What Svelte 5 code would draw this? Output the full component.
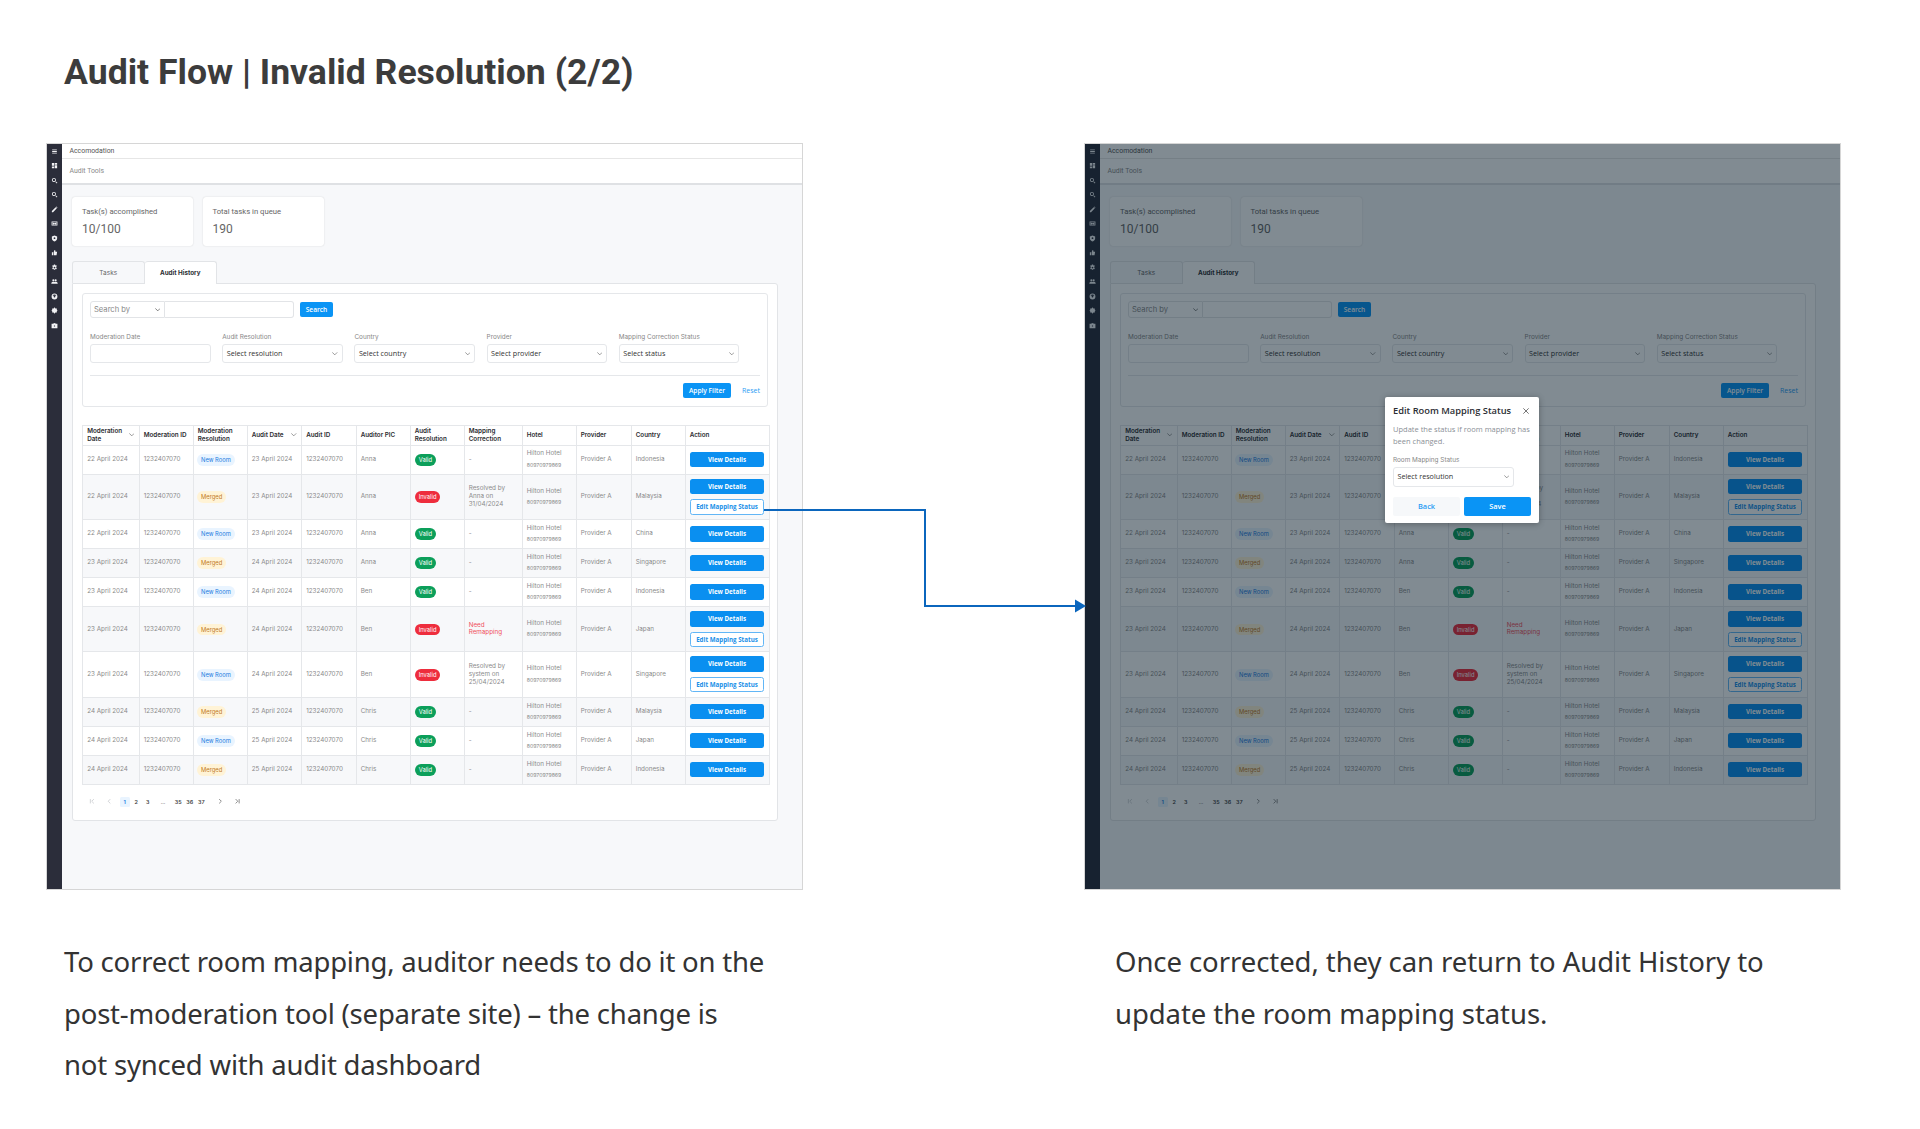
<script>
  const rows = [
    { mod: '22 April 2024', res: 'New Room', audit: '23 April 2024', pic: 'Anna', status: 'Valid', fix: '-', country: 'Indonesia' },
    { mod: '22 April 2024', res: 'Merged', audit: '23 April 2024', pic: 'Anna', status: 'Invalid', fix: 'Resolved by Anna on 31/04/2024', country: 'Malaysia', edit: true },
    { mod: '22 April 2024', res: 'New Room', audit: '23 April 2024', pic: 'Anna', status: 'Valid', fix: '-', country: 'China' },
    { mod: '23 April 2024', res: 'Merged', audit: '24 April 2024', pic: 'Anna', status: 'Valid', fix: '-', country: 'Singapore' },
    { mod: '23 April 2024', res: 'New Room', audit: '24 April 2024', pic: 'Ben', status: 'Valid', fix: '-', country: 'Indonesia' },
    { mod: '23 April 2024', res: 'Merged', audit: '24 April 2024', pic: 'Ben', status: 'Invalid', fix: 'Need Remapping', need: true, country: 'Japan', edit: true },
    { mod: '23 April 2024', res: 'New Room', audit: '24 April 2024', pic: 'Ben', status: 'Invalid', fix: 'Resolved by system on 25/04/2024', country: 'Singapore', edit: true },
    { mod: '24 April 2024', res: 'Merged', audit: '25 April 2024', pic: 'Chris', status: 'Valid', fix: '-', country: 'Malaysia' },
    { mod: '24 April 2024', res: 'New Room', audit: '25 April 2024', pic: 'Chris', status: 'Valid', fix: '-', country: 'Japan' },
    { mod: '24 April 2024', res: 'Merged', audit: '25 April 2024', pic: 'Chris', status: 'Valid', fix: '-', country: 'Indonesia' }
  ];

  const colWidths = [56.5, 54, 54, 54.5, 54.5, 54, 54, 58, 54, 55, 54, 84];
  const filters = [
    { label: 'Audit Resolution', text: 'Select resolution' },
    { label: 'Country', text: 'Select country' },
    { label: 'Provider', text: 'Select provider' },
    { label: 'Mapping Correction Status', text: 'Select status' }
  ];

  // sidebar glyphs, 24 box, filled
  const navIcons = [
    'M4 5h16v3H4zM4 10.5h16v3H4zM4 16h16v3H4z',
    'M3 3h8v10H3zM13 3h8v6h-8zM13 11h8v10h-8zM3 15h8v6H3z',
    'M10 3a7 7 0 1 1 0 14 7 7 0 0 1 0-14zm0 3a4 4 0 1 0 0 8 4 4 0 0 0 0-8zM15 17l2-2 5 5-2 2z',
    'M10 3a7 7 0 1 1 0 14 7 7 0 0 1 0-14zm0 3a4 4 0 1 0 0 8 4 4 0 0 0 0-8zM15 17l2-2 5 5-2 2z',
    'M3 21v-4L16 4l4 4L7 21zM17 3l2-1 3 3-1 2z',
    'M2 5h20v14H2zm3 3v8h14V8zm4 1a3 3 0 1 1 0 6 3 3 0 0 1 0-6zm6 0a3 3 0 1 1 0 6 3 3 0 0 1 0-6z',
    'M12 2l9 3v7c0 5-4 8-9 10-5-2-9-5-9-10V5zm0 6a3 3 0 1 0 0 6 3 3 0 0 0 0-6z',
    'M3 11h4v10H3zM9 11l3-8c2 0 3 1 3 3v3h6l-2 12H9z',
    'M10 2h4l1 3 3-1 2 3-2 2v4l2 2-2 3-3-1-1 3h-4l-1-3-3 1-2-3 2-2v-4L4 7l2-3 3 1zm2 7a3 3 0 1 0 0 6 3 3 0 0 0 0-6z',
    'M8 4a3.5 3.5 0 1 1 0 7 3.5 3.5 0 0 1 0-7zm8 0a3.5 3.5 0 1 1 0 7 3.5 3.5 0 0 1 0-7zM1 20c0-5 3-7 7-7 2 0 3 .5 4 1 1-.5 2-1 4-1 4 0 7 2 7 7z',
    'M12 2a10 10 0 1 1 0 20 10 10 0 0 1 0-20zm0 3a7 7 0 0 0-6.5 4.5h13A7 7 0 0 0 12 5zm0 4a3 3 0 1 0 0 6 3 3 0 0 0 0-6z',
    'M12 1l3 4h5v5l3 2-3 2v5h-5l-3 4-3-4H4v-5l-3-2 3-2V5h5z',
    'M9 3h6v3h7v15H2V6h7zm2 2v1h2V5zm-1 7v3h4v-3z'
  ];
</script>

{#snippet chevron()}
  <svg class="chev" viewBox="0 0 10 6" fill="none" stroke="currentColor" stroke-width="1.2" stroke-linecap="round" stroke-linejoin="round">
    <polyline points="1 1 5 5 9 1"></polyline>
  </svg>
{/snippet}

{#snippet screen(dimmed)}
  <div class="mock">
    <aside class="rail">
      {#each navIcons as d}
        <svg viewBox="0 0 24 24" fill="currentColor" fill-rule="evenodd"><path {d}></path></svg>
      {/each}
    </aside>

    <div class="main">
      <div class="crumb">Accomodation</div>
      <div class="subcrumb">Audit Tools</div>

      <div class="content">
        <div class="stats">
          <div class="stat">
            <div class="stat-label">Task(s) accomplished</div>
            <div class="stat-value">10/100</div>
          </div>
          <div class="stat">
            <div class="stat-label">Total tasks in queue</div>
            <div class="stat-value">190</div>
          </div>
        </div>

        <div class="tabs">
          <div class="tab">Tasks</div>
          <div class="tab active">Audit History</div>
        </div>

        <div class="panel">
          <div class="filters">
            <div class="search-row">
              <div class="search-by">Search by {@render chevron()}</div>
              <div class="search-input"></div>
              <div class="btn-search">Search</div>
            </div>

            <div class="filter-grid">
              <div class="field">
                <span class="field-label">Moderation Date</span>
                <div class="select"></div>
              </div>
              {#each filters as f}
                <div class="field">
                  <span class="field-label">{f.label}</span>
                  <div class="select">{f.text} {@render chevron()}</div>
                </div>
              {/each}
            </div>

            <div class="filter-foot">
              <div class="btn-apply">Apply Filter</div>
              <span class="reset">Reset</span>
            </div>
          </div>

          <table>
            <colgroup>
              {#each colWidths as w}<col style="width:{w}px" />{/each}
            </colgroup>
            <thead>
              <tr>
                <th><div class="th-sort">Moderation Date {@render chevron()}</div></th>
                <th>Moderation ID</th>
                <th>Moderation Resolution</th>
                <th><div class="th-sort">Audit Date {@render chevron()}</div></th>
                <th>Audit ID</th>
                <th>Auditor PIC</th>
                <th>Audit Resolution</th>
                <th>Mapping Correction</th>
                <th>Hotel</th>
                <th>Provider</th>
                <th>Country</th>
                <th>Action</th>
              </tr>
            </thead>
            <tbody>
              {#each rows as r}
                <tr class:tall={r.edit}>
                  <td>{r.mod}</td>
                  <td>1232407070</td>
                  <td><span class="badge" class:new={r.res === 'New Room'} class:merged={r.res === 'Merged'}>{r.res}</span></td>
                  <td>{r.audit}</td>
                  <td>1232407070</td>
                  <td>{r.pic}</td>
                  <td><span class="pill" class:invalid={r.status === 'Invalid'}>{r.status}</span></td>
                  <td class:need={r.need}>{r.fix}</td>
                  <td class="hotel">Hilton Hotel<small>80970979869</small></td>
                  <td>Provider A</td>
                  <td>{r.country}</td>
                  <td class="actions">
                    <div class="btn-view">View Details</div>
                    {#if r.edit}<div class="btn-edit">Edit Mapping Status</div>{/if}
                  </td>
                </tr>
              {/each}
            </tbody>
          </table>

          <div class="pager">
            <svg class="off" viewBox="0 0 12 12"><path d="M2.5 2v8M9 2L5 6l4 4"></path></svg>
            <svg class="off gap" viewBox="0 0 12 12"><path d="M8 2L4 6l4 4"></path></svg>
            <span class="page on">1</span>
            <span class="page">2</span>
            <span class="page">3</span>
            <span class="page dots">...</span>
            <span class="page">35</span>
            <span class="page">36</span>
            <span class="page">37</span>
            <svg class="gap" viewBox="0 0 12 12"><path d="M4 2l4 4-4 4"></path></svg>
            <svg class="gap" viewBox="0 0 12 12"><path d="M3 2l4 4-4 4M9.5 2v8"></path></svg>
          </div>
        </div>
      </div>
    </div>

    {#if dimmed}
      <div class="scrim"></div>
      <div class="modal">
        <div class="modal-head">
          <span>Edit Room Mapping Status</span>
          <svg viewBox="0 0 12 12" fill="none" stroke="currentColor" stroke-width="1.1"><path d="M2 2l8 8M10 2l-8 8"></path></svg>
        </div>
        <p>Update the status if room mapping has been changed.</p>
        <span class="field-label">Room Mapping Status</span>
        <div class="select modal-select">Select resolution {@render chevron()}</div>
        <div class="modal-foot">
          <div class="btn-back">Back</div>
          <div class="btn-save">Save</div>
        </div>
      </div>
    {/if}
  </div>
{/snippet}

<div class="page-wrap">
  <h1>Audit Flow | Invalid Resolution (2/2)</h1>

  <div class="columns">
    <section>
      {@render screen(false)}
      <p class="caption first">To correct room mapping, auditor needs to do it on the<br />post-moderation tool (separate site) – the change is<br />not synced with audit dashboard</p>
    </section>
    <section>
      {@render screen(true)}
      <p class="caption second">Once corrected, they can return to Audit History to update the room mapping status.</p>
    </section>
  </div>

  <svg class="flow" width="330" height="110" viewBox="0 0 330 110" fill="none">
    <path d="M0 1H161V97H312" stroke="#0b66bd" stroke-width="2"></path>
    <path d="M311 90.5V103.5L322 97Z" fill="#0b66bd"></path>
  </svg>
</div>

<style>
  :global(body) {
    margin: 0;
    background: #fff;
  }
  .page-wrap {
    position: relative;
    height: 1129px;
    overflow: hidden;
    padding-left: 46px;
    box-sizing: border-box;
  }
  h1 {
    margin: 0;
    padding: 50px 0 0 18px;
    height: 143px;
    box-sizing: border-box;
    font: 700 35.6px/44px Roboto, sans-serif;
    color: #3c3c3c;
  }
  .columns {
    display: flex;
    gap: 281px;
  }
  section {
    width: 757px;
  }
  .caption {
    margin: 46px 0 0;
    font: 400 27.5px/51.5px "Noto Sans", sans-serif;
    letter-spacing: -0.2px;
    color: #333;
  }
  .caption.first {
    margin-left: 18px;
    width: 725px;
  }
  .caption.second {
    margin-left: 31px;
    width: 715px;
    letter-spacing: -0.07px;
  }
  .flow {
    position: absolute;
    left: 764px;
    top: 509px;
    overflow: visible;
  }

  /* mock screen */
  .mock {
    position: relative;
    display: flex;
    width: 757px;
    height: 747px;
    box-sizing: border-box;
    border: 1px solid #d6d6d6;
    overflow: hidden;
    font-family: Inter, sans-serif;
    background: #f7f8fa;
  }
  .rail {
    flex: 0 0 14.5px;
    display: flex;
    flex-direction: column;
    align-items: center;
    gap: 7.5px;
    padding-top: 3.5px;
    background: #2b2d3a;
    color: #f2f2f5;
  }
  .rail svg {
    width: 7px;
    height: 7px;
    flex: none;
  }
  .main {
    flex: 1;
    min-width: 0;
  }
  .crumb {
    height: 14px;
    padding-left: 8px;
    background: #fff;
    border-bottom: 1px solid #e6e6e6;
    font: 400 6.9px/15px Roboto, sans-serif;
    color: #555;
  }
  .subcrumb {
    height: 24px;
    padding-left: 8px;
    background: #fff;
    border-bottom: 2px solid #dfe1e4;
    font: 400 6.9px/24px Roboto, sans-serif;
    color: #8a8a8a;
  }
  .content {
    padding: 12px 24px 0 10.5px;
  }
  .stats {
    display: flex;
    gap: 9.5px;
  }
  .stat {
    width: 121px;
    height: 48.5px;
    box-sizing: border-box;
    padding: 10px;
    background: #fff;
    border-radius: 3px;
    box-shadow: 0 0 1.5px rgba(0, 0, 0, 0.18);
    font-family: Roboto, sans-serif;
    color: #666;
  }
  .stat-label {
    font-size: 7.7px;
    line-height: 10px;
  }
  .stat-value {
    margin-top: 5px;
    font-size: 12px;
    line-height: 14px;
  }
  .tabs {
    display: flex;
    margin-top: 15px;
  }
  .tab {
    width: 72.5px;
    height: 22px;
    box-sizing: border-box;
    border: 1px solid #e2e4e7;
    border-bottom: 0;
    border-radius: 3px 3px 0 0;
    text-align: center;
    font: 400 6.5px/22px Inter, sans-serif;
    color: #666;
    background: #f7f8fa;
  }
  .tab.active {
    position: relative;
    margin-bottom: -1px;
    height: 23px;
    background: #fff;
    font-weight: 700;
    font-size: 6.3px;
    color: #2b2d33;
    border-left: 0;
  }
  .panel {
    height: 538px;
    box-sizing: border-box;
    padding: 9px;
    background: #fff;
    border: 1px solid #e2e4e7;
    border-radius: 0 3px 3px 3px;
  }
  .filters {
    height: 114px;
    box-sizing: border-box;
    padding: 7px 7px 0;
    border: 1px solid #e5e7ea;
    border-radius: 3px;
  }
  .search-row {
    display: flex;
    align-items: center;
  }
  .search-by {
    display: flex;
    align-items: center;
    justify-content: space-between;
    width: 75px;
    height: 17.5px;
    box-sizing: border-box;
    padding: 0 4px 0 3px;
    border: 1px solid #e2e4e7;
    border-radius: 3px 0 0 3px;
    font-size: 7.6px;
    color: #888;
  }
  .search-by .chev {
    color: #444;
  }
  .search-input {
    width: 129px;
    height: 17.5px;
    box-sizing: border-box;
    border: 1px solid #e2e4e7;
    border-left: 0;
    border-radius: 0 3px 3px 0;
  }
  .btn-search {
    margin-left: 6px;
    width: 33px;
    height: 15px;
    border-radius: 2px;
    background: #0a94f5;
    color: #fff;
    text-align: center;
    font: 600 6.6px/15px "Open Sans", sans-serif;
  }
  .filter-grid {
    display: grid;
    grid-template-columns: repeat(5, 120.7px);
    gap: 11.5px;
    margin-top: 15px;
  }
  .field-label {
    display: block;
    margin-bottom: 2px;
    font-size: 6.4px;
    line-height: 9px;
    color: #888;
  }
  .select {
    display: flex;
    align-items: center;
    justify-content: space-between;
    height: 19px;
    box-sizing: border-box;
    padding: 0 4px 0 3.5px;
    border: 1px solid #e5e7ea;
    border-radius: 3px;
    font: 500 7.2px/1 "Open Sans", sans-serif;
    color: #333;
  }
  .chev {
    width: 5.5px;
    height: 3.5px;
    flex: none;
    color: #666;
  }
  .filter-foot {
    display: flex;
    justify-content: flex-end;
    align-items: center;
    gap: 11px;
    margin-top: 12px;
    padding-top: 7px;
    border-top: 1px solid #e5e7ea;
  }
  .btn-apply {
    width: 48px;
    height: 15px;
    border-radius: 2px;
    background: #0a94f5;
    color: #fff;
    text-align: center;
    font: 600 6.6px/15px "Open Sans", sans-serif;
  }
  .reset {
    font: 400 7px/15px "Open Sans", sans-serif;
    color: #2a9df4;
  }

  table {
    width: 687px;
    margin-top: 18px;
    table-layout: fixed;
    border-collapse: collapse;
    border: 1px solid #e5e7ea;
  }
  thead tr {
    height: 20px;
  }
  th {
    padding: 0 4.2px;
    border: 1px solid #e5e7ea;
    border-top: 0;
    text-align: left;
    font: 600 6.3px/8px Inter, sans-serif;
    color: #2c2c30;
  }
  .th-sort {
    display: flex;
    align-items: center;
    justify-content: space-between;
  }
  tbody tr {
    height: 29px;
  }
  tbody tr.tall {
    height: 45.4px;
  }
  tbody tr:nth-child(even) {
    background: #f7f8fa;
  }
  td {
    padding: 0.6px 4.2px 0;
    border: 1px solid #e5e7ea;
    font: 400 6.3px/7.7px Inter, sans-serif;
    color: #8a8a8a;
  }
  td.need {
    color: #f0505c;
  }
  .badge {
    display: inline-block;
    padding: 0 4px;
    height: 11.5px;
    border-radius: 6px;
    font-size: 5.8px;
    line-height: 11.5px;
    margin-left: -0.6px;
  }
  .badge.new {
    background: #e9f4ff;
    color: #1a7ae0;
  }
  .badge.merged {
    background: #fff3d6;
    color: #bf7a1c;
  }
  .pill {
    display: inline-block;
    padding: 0 4px;
    height: 11.5px;
    border-radius: 6px;
    background: #0c9f5a;
    color: #fff;
    font-size: 5.8px;
    line-height: 11.5px;
  }
  .pill.invalid {
    background: #ee2d3d;
  }
  .hotel {
    line-height: 11.4px;
  }
  .hotel small {
    display: block;
    font-size: 5.2px;
    color: #888;
  }
  .actions {
    padding: 0 4.6px;
  }
  .btn-view,
  .btn-edit {
    height: 15.5px;
    box-sizing: border-box;
    border-radius: 2.5px;
    text-align: center;
    font: 700 6.2px/15.5px "Open Sans", sans-serif;
  }
  .btn-view {
    background: #0a8ff0;
    color: #fff;
  }
  .btn-edit {
    margin-top: 5px;
    background: #fff;
    border: 1px solid #62b6f6;
    line-height: 13.5px;
    color: #1a8fe8;
  }

  .pager {
    display: flex;
    align-items: center;
    height: 10px;
    margin-top: 12px;
    padding-left: 7px;
  }
  .pager svg {
    width: 6.5px;
    height: 6.5px;
    flex: none;
    fill: none;
    stroke: #444;
    stroke-width: 1.1;
  }
  .pager svg.off {
    stroke: #b5b8bd;
  }
  .pager .gap {
    margin-left: 10px;
  }
  .pager .off.gap {
    margin-right: 8px;
  }
  .page {
    width: 11.5px;
    text-align: center;
    font: 600 5.4px/10px Inter, sans-serif;
    color: #444;
  }
  .page.on {
    width: 9.5px;
    margin-right: 1px;
    border-radius: 1.5px;
    background: #e9f4ff;
    color: #1a7ae0;
  }
  .page.dots {
    width: 19px;
    font-weight: 400;
    color: #777;
  }

  /* modal over the dimmed screen */
  .scrim {
    position: absolute;
    inset: 0;
    background: rgba(4, 24, 38, 0.5);
  }
  .modal {
    position: absolute;
    left: 300px;
    top: 253px;
    width: 154px;
    height: 126px;
    box-sizing: border-box;
    padding: 7px 8px;
    background: #fff;
    border-radius: 2px;
    box-shadow: 0 1px 6px rgba(0, 0, 0, 0.3);
  }
  .modal-head {
    display: flex;
    justify-content: space-between;
    align-items: center;
    height: 13px;
    font: 600 9.3px/13px "Open Sans", sans-serif;
    color: #2b2d33;
  }
  .modal-head svg {
    width: 8px;
    height: 8px;
    margin-right: 1px;
    color: #444;
  }
  .modal p {
    margin: 6px 0 9px;
    font: 400 7.5px/12px "Open Sans", sans-serif;
    color: #8a8f96;
  }
  .modal-select {
    width: 121px;
    height: 19.5px;
  }
  .modal-foot {
    display: flex;
    gap: 4px;
    margin-top: 10px;
  }
  .btn-back,
  .btn-save {
    width: 67.5px;
    height: 19px;
    border-radius: 2px;
    text-align: center;
    font: 600 7.4px/19px "Open Sans", sans-serif;
  }
  .btn-back {
    background: #f6f8fa;
    color: #2a9df4;
  }
  .btn-save {
    background: #0a94f5;
    color: #fff;
  }
</style>
